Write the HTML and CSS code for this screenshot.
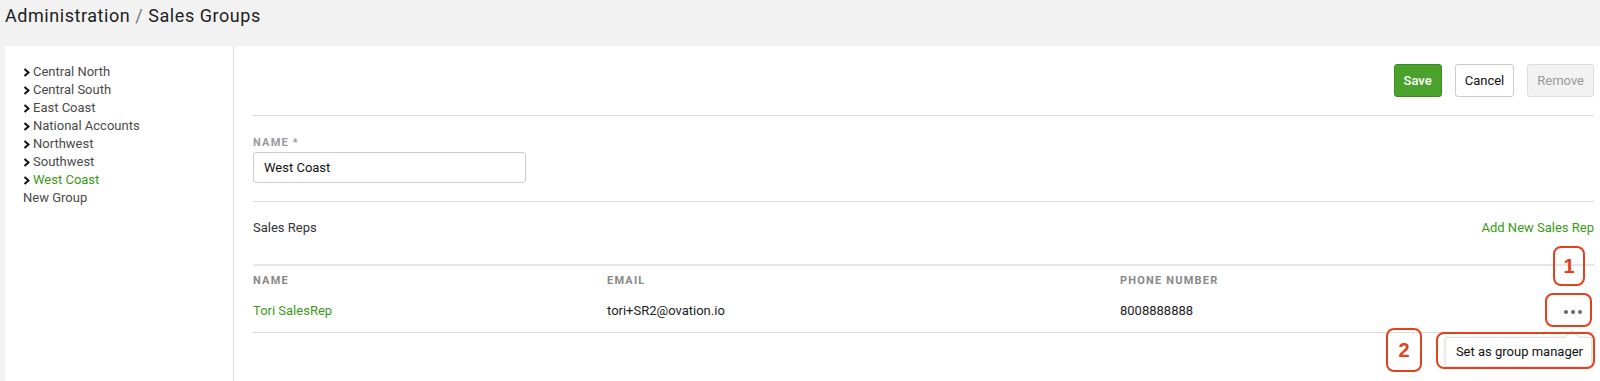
FILE: index.html
```html
<!DOCTYPE html>
<html lang="en">
<head>
    <meta charset="UTF-8">
    <title>Administration / Sales Groups</title>
    <link rel="stylesheet" href="styles.css">
</head>
<body>
    <h1 class="page-title">Administration <span class="sep">/</span> Sales Groups</h1>

    <div class="card">
        <ul class="sidebar">
            <li><svg class="chev" viewBox="0 0 7 9"><polyline points="1.5,1 5.5,4.5 1.5,8"/></svg>Central North</li>
            <li><svg class="chev" viewBox="0 0 7 9"><polyline points="1.5,1 5.5,4.5 1.5,8"/></svg>Central South</li>
            <li><svg class="chev" viewBox="0 0 7 9"><polyline points="1.5,1 5.5,4.5 1.5,8"/></svg>East Coast</li>
            <li><svg class="chev" viewBox="0 0 7 9"><polyline points="1.5,1 5.5,4.5 1.5,8"/></svg>National Accounts</li>
            <li><svg class="chev" viewBox="0 0 7 9"><polyline points="1.5,1 5.5,4.5 1.5,8"/></svg>Northwest</li>
            <li><svg class="chev" viewBox="0 0 7 9"><polyline points="1.5,1 5.5,4.5 1.5,8"/></svg>Southwest</li>
            <li class="active"><svg class="chev" viewBox="0 0 7 9"><polyline points="1.5,1 5.5,4.5 1.5,8"/></svg>West Coast</li>
            <li class="new">New Group</li>
        </ul>

        <div class="main">
            <div class="toolbar">
                <button class="btn btn-save">Save</button>
                <button class="btn">Cancel</button>
                <button class="btn btn-disabled">Remove</button>
            </div>

            <div class="field">
                <label class="label">NAME *</label>
                <input class="input" type="text" value="West Coast">
            </div>

            <div class="reps-head">
                <span>Sales Reps</span>
                <a class="link" href="#">Add New Sales Rep</a>
            </div>

            <div class="reps">
                <div class="th">NAME</div>
                <div class="th">EMAIL</div>
                <div class="th">PHONE NUMBER</div>
                <div class="th"></div>

                <div class="td"><a class="link" href="#">Tori SalesRep</a></div>
                <div class="td">tori+SR2@ovation.io</div>
                <div class="td">8008888888</div>
                <div class="td actions">
                    <span class="dots"><i></i><i></i><i></i></span>
                    <div class="menu">Set as group manager</div>
                </div>
            </div>
        </div>
    </div>

    <!-- annotation marks drawn over the screenshot -->
    <div class="mark mark-1">1</div>
    <div class="mark mark-dots"></div>
    <div class="mark mark-2">2</div>
    <div class="mark mark-menu"></div>
</body>
</html>
```

FILE: styles.css
```css
body {
    margin: 0;
    background: #f2f2f2;
    font-family: Roboto, "Liberation Sans", Arial, sans-serif;
    color: #222;
    height: 381px;
    overflow: hidden;
}
.page-title {
    margin: 0;
    padding: 5px 5px 0;
    height: 41px;
    font-size: 18px;
    line-height: 22px;
    font-weight: 400;
    letter-spacing: 0.55px;
    color: #1e1e1e;
}
.page-title .sep {
    color: #777;
}
.card {
    display: flex;
    margin-left: 5px;
    background: #fff;
    height: 340px;
}
.sidebar {
    list-style: none;
    margin: 0;
    padding: 17px 18px;
    width: 192px;
    border-right: 1px solid #ddd;
    font-size: 13px;
    line-height: 18px;
    color: #4a4a4a;
}
.sidebar li {
    display: flex;
    align-items: center;
}
.sidebar .chev {
    width: 7px;
    height: 9px;
    margin-right: 3px;
    fill: none;
    stroke: #111;
    stroke-width: 2;
}
.sidebar .active {
    color: #3a9a17;
}
.main {
    flex: 1;
    padding: 18px 6px 0 19px;
}
.toolbar {
    display: flex;
    justify-content: flex-end;
    gap: 13px;
    padding-bottom: 18px;
    border-bottom: 1px solid #ddd;
}
.btn {
    height: 33px;
    padding: 0 9px;
    font-family: inherit;
    font-size: 13px;
    color: #111;
    background: #fff;
    border: 1px solid #ccc;
    border-radius: 3px;
}
.btn-save {
    background: #4aa22c;
    border-color: #3b8c20;
    color: #fff;
    font-weight: 500;
}
.btn-disabled {
    background: #f2f2f2;
    border-color: #ddd;
    color: #999;
}
.field {
    padding: 20px 0 18px;
    border-bottom: 1px solid #ddd;
}
.label {
    display: block;
    font-size: 11px;
    line-height: 13px;
    font-weight: 700;
    letter-spacing: 1.2px;
    color: #999;
    margin-bottom: 3px;
}
.input {
    box-sizing: border-box;
    width: 273px;
    height: 31px;
    padding: 0 10px;
    font-family: inherit;
    font-size: 13px;
    color: #111;
    border: 1px solid #ccc;
    border-radius: 3px;
}
.reps-head {
    display: flex;
    justify-content: space-between;
    padding-top: 17px;
    font-size: 13px;
    line-height: 18px;
    color: #333;
    height: 45px;
    border-bottom: 2px solid #e6e6e6;
}
.link {
    color: #3a9a17;
    text-decoration: none;
}
.reps {
    display: grid;
    grid-template-columns: 354px 513px 1fr 60px;
    font-size: 13px;
    border-bottom: 1px solid #ddd;
}
.th {
    padding: 8px 0 7px;
    font-size: 11px;
    line-height: 13px;
    font-weight: 700;
    letter-spacing: 1.2px;
    color: #888;
}
.td {
    padding: 8px 0 12px;
    line-height: 18px;
    color: #222;
}
.actions {
    position: relative;
    display: flex;
    justify-content: flex-end;
    align-items: center;
    padding-right: 12px;
}
.dots {
    display: flex;
    gap: 3px;
    margin-top: 2px;
}
.dots i {
    width: 4px;
    height: 4px;
    border-radius: 50%;
    background: #666;
}
.menu {
    position: absolute;
    top: 43px;
    right: 2px;
    white-space: nowrap;
    padding: 5px 8px 5px 10px;
    line-height: 18px;
    background: #fff;
    border: 1px solid #e2e2e2;
    border-radius: 2px;
    box-shadow: 0 1px 4px rgba(0, 0, 0, 0.15);
    color: #111;
}
.menu::before {
    content: "";
    position: absolute;
    top: -6px;
    right: 14px;
    width: 9px;
    height: 9px;
    background: #fff;
    border-left: 1px solid #e2e2e2;
    border-top: 1px solid #e2e2e2;
    transform: rotate(45deg);
}
.mark {
    position: absolute;
    box-sizing: border-box;
    border: 2px solid #e2411d;
    border-radius: 8px;
    color: #e2411d;
    font-family: "Liberation Sans", Arial, sans-serif;
    font-weight: 700;
    font-size: 20px;
    display: flex;
    align-items: center;
    justify-content: center;
}
.mark-1 {
    left: 1553px;
    top: 246px;
    width: 32px;
    height: 40px;
}
.mark-dots {
    left: 1545px;
    top: 293px;
    width: 47px;
    height: 34px;
}
.mark-2 {
    left: 1386px;
    top: 328px;
    width: 36px;
    height: 44px;
}
.mark-menu {
    left: 1436px;
    top: 332px;
    width: 159px;
    height: 37px;
}
```
